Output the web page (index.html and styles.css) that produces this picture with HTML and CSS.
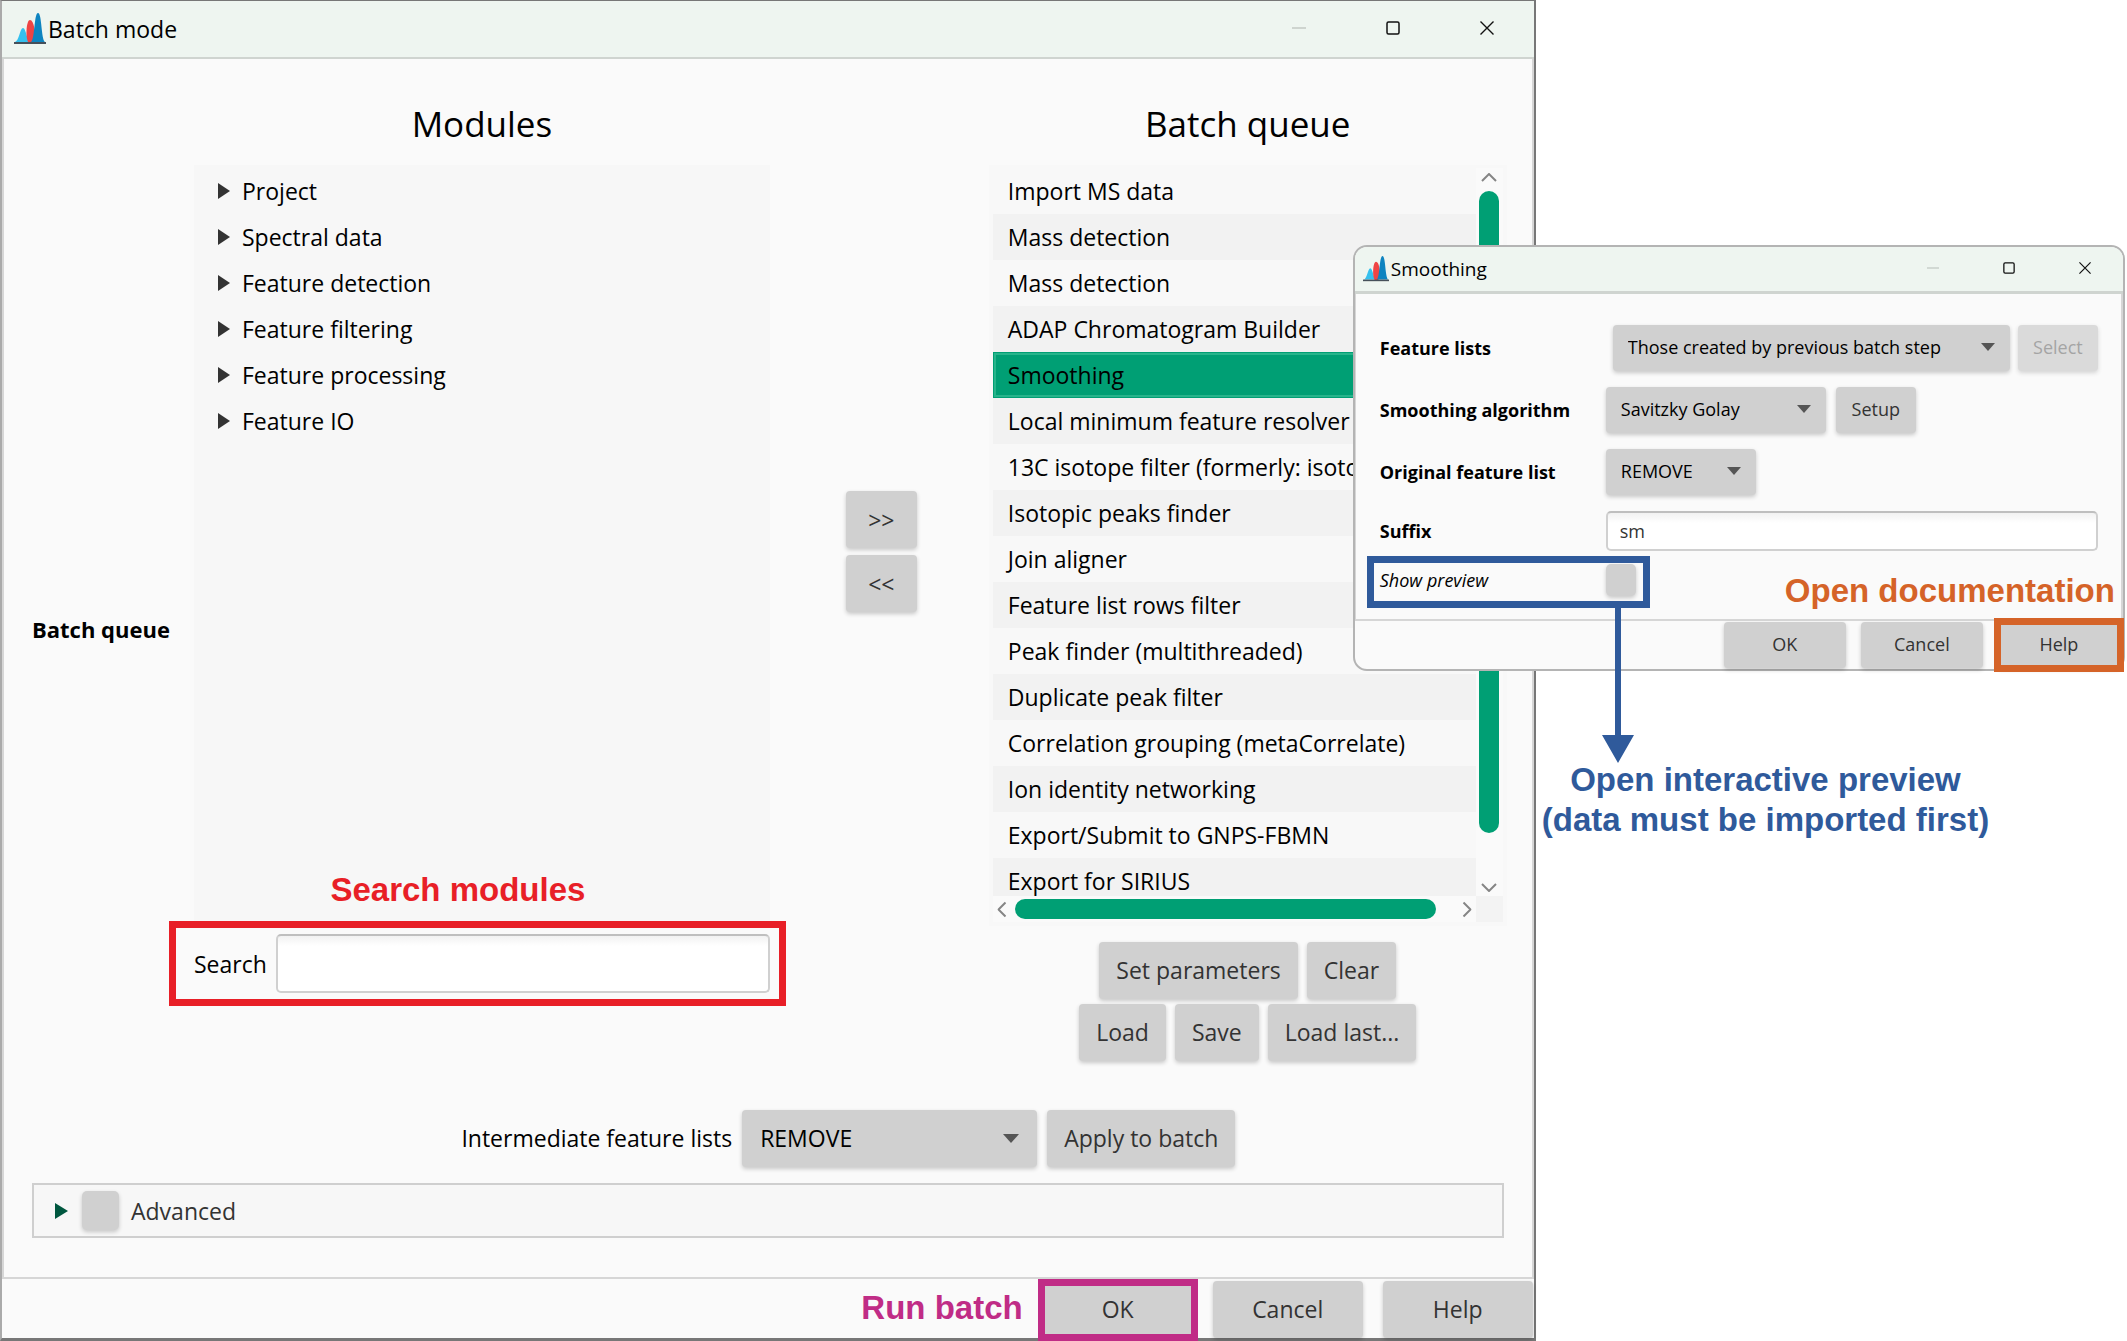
FILE: index.html
```html
<!DOCTYPE html>
<html lang="en">
<head>
<meta charset="utf-8">
<title>Batch mode</title>
<link rel="stylesheet" href="styles.css">
</head>
<body>
<svg class="defs" aria-hidden="true">
  <symbol id="logo" viewBox="0 0 32 32">
    <path d="M1 29C5 28 6 15 9 15s4 13 7 14z" fill="#35c0ee"/>
    <path d="M17 30H15C11 27 12 7 16 7s5 12 5 16c0 4-2 7-4 7z" fill="#ef4444"/>
    <path d="M17 29C21 26 20 0 24 0s3 26 7 29z" fill="#0e84c0"/>
    <path d="M0 29h32v2H0z" fill="#46505a"/>
  </symbol>
  <symbol id="min" viewBox="0 0 14 14"><path d="M0 7h14" stroke="#c3c8c4" stroke-width="1.5"/></symbol>
  <symbol id="max" viewBox="0 0 14 14"><rect x="1" y="1" width="12" height="12" rx="1.5" fill="none" stroke="#111" stroke-width="1.5"/></symbol>
  <symbol id="close" viewBox="0 0 14 14"><path d="M.5.5l13 13M13.5.5l-13 13" stroke="#111" stroke-width="1.4"/></symbol>
  <symbol id="chev" viewBox="0 0 16 9"><path d="M1 8l7-7 7 7" fill="none" stroke="#858585" stroke-width="2"/></symbol>
</svg>

<main class="window">
  <header class="titlebar">
    <svg class="logo"><use href="#logo"/></svg>
    <h1 class="title">Batch mode</h1>
    <div class="controls">
      <button class="control" aria-label="Minimize" disabled><svg><use href="#min"/></svg></button>
      <button class="control" aria-label="Maximize"><svg><use href="#max"/></svg></button>
      <button class="control" aria-label="Close"><svg><use href="#close"/></svg></button>
    </div>
  </header>

  <div class="content">
    <div class="workspace">
      <div class="side-label">Batch queue</div>

      <section class="column">
        <h2 class="heading">Modules</h2>
        <div class="tree">
          <details><summary>Project</summary></details>
          <details><summary>Spectral data</summary></details>
          <details><summary>Feature detection</summary></details>
          <details><summary>Feature filtering</summary></details>
          <details><summary>Feature processing</summary></details>
          <details><summary>Feature IO</summary></details>
          <div class="note note-search">Search modules</div>
        </div>
        <div class="search">
          <label for="search">Search</label>
          <input class="field" id="search" type="text">
          <span class="frame frame-search"></span>
        </div>
      </section>

      <div class="transfer">
        <button class="btn">&gt;&gt;</button>
        <button class="btn">&lt;&lt;</button>
      </div>

      <section class="column">
        <h2 class="heading">Batch queue</h2>
        <div class="queue">
          <ul class="steps">
            <li>Import MS data</li>
            <li>Mass detection</li>
            <li>Mass detection</li>
            <li>ADAP Chromatogram Builder</li>
            <li class="selected">Smoothing</li>
            <li>Local minimum feature resolver</li>
            <li>13C isotope filter (formerly: isoto</li>
            <li>Isotopic peaks finder</li>
            <li>Join aligner</li>
            <li>Feature list rows filter</li>
            <li>Peak finder (multithreaded)</li>
            <li>Duplicate peak filter</li>
            <li>Correlation grouping (metaCorrelate)</li>
            <li>Ion identity networking</li>
            <li>Export/Submit to GNPS-FBMN</li>
            <li>Export for SIRIUS</li>
          </ul>
          <div class="bar bar-v">
            <svg class="chev"><use href="#chev"/></svg>
            <span class="track"><span class="thumb"></span></span>
            <svg class="chev chev-down"><use href="#chev"/></svg>
          </div>
          <div class="bar bar-h">
            <svg class="chev chev-left"><use href="#chev"/></svg>
            <span class="track"><span class="thumb"></span></span>
            <svg class="chev chev-right"><use href="#chev"/></svg>
          </div>
          <div class="corner"></div>
        </div>
        <div class="actions">
          <div class="action-row">
            <button class="btn">Set parameters</button>
            <button class="btn">Clear</button>
          </div>
          <div class="action-row">
            <button class="btn">Load</button>
            <button class="btn">Save</button>
            <button class="btn">Load last...</button>
          </div>
        </div>
      </section>
    </div>

    <div class="intermediate">
      <label for="intermediate">Intermediate feature lists</label>
      <span class="combo combo-wide"><select id="intermediate"><option>REMOVE</option></select></span>
      <button class="btn">Apply to batch</button>
    </div>

    <div class="advanced">
      <span class="arrow"></span>
      <input class="check" type="checkbox" id="advanced">
      <label for="advanced">Advanced</label>
    </div>
  </div>

  <footer class="footer">
    <span class="note note-run">Run batch</span>
    <button class="btn">OK<span class="frame frame-run"></span></button>
    <button class="btn">Cancel</button>
    <button class="btn">Help</button>
  </footer>
</main>

<section class="dialog" role="dialog" aria-label="Smoothing">
  <header class="titlebar">
    <svg class="logo"><use href="#logo"/></svg>
    <h2 class="title">Smoothing</h2>
    <div class="controls">
      <button class="control" aria-label="Minimize" disabled><svg><use href="#min"/></svg></button>
      <button class="control" aria-label="Maximize"><svg><use href="#max"/></svg></button>
      <button class="control" aria-label="Close"><svg><use href="#close"/></svg></button>
    </div>
  </header>
  <div class="form">
    <div class="row">
      <label for="lists">Feature lists</label>
      <div class="group group-lists">
        <span class="combo combo-fill"><select id="lists"><option>Those created by previous batch step</option></select></span>
        <button class="btn" disabled>Select</button>
      </div>
    </div>
    <div class="row">
      <label for="algorithm">Smoothing algorithm</label>
      <div class="group">
        <span class="combo combo-algorithm"><select id="algorithm"><option>Savitzky Golay</option></select></span>
        <button class="btn">Setup</button>
      </div>
    </div>
    <div class="row">
      <label for="original">Original feature list</label>
      <div class="group">
        <span class="combo combo-original"><select id="original"><option>REMOVE</option></select></span>
      </div>
    </div>
    <div class="row">
      <label for="suffix">Suffix</label>
      <input class="field" id="suffix" type="text" value="sm">
    </div>
    <div class="row row-preview">
      <label for="preview">Show preview</label>
      <input class="check" type="checkbox" id="preview">
      <span class="frame frame-preview"></span>
      <svg class="pointer" viewBox="0 0 32 156"><path d="M13 0h6v128h13l-16 28L0 128h13z" fill="#2f5a9b"/></svg>
      <span class="note note-preview">Open interactive preview<br>(data must be imported first)</span>
    </div>
  </div>
  <footer class="footer">
    <span class="note note-docs">Open documentation</span>
    <button class="btn">OK</button>
    <button class="btn">Cancel</button>
    <button class="btn">Help<span class="frame frame-help"></span></button>
  </footer>
</section>
</body>
</html>
```
FILE: styles.css
```css
* { box-sizing: border-box; }

body {
  margin: 0;
  position: relative;
  min-height: 100vh;
  background: #fff;
  color: #000;
  font: 23px/32px "Open Sans", "Noto Sans", sans-serif;
}

button, input, select { font: inherit; margin: 0; }
h1, h2 { margin: 0; font-weight: 400; }
.defs { position: absolute; width: 0; height: 0; }

/* Windows */
.window {
  display: flex;
  flex-direction: column;
  width: 72.2%;
  min-height: 100vh;
  background: #fafafa;
  border: 2px solid #777;
  border-left-color: #aaa;
  border-width: 1px 2px 3px 2px;
}

.titlebar {
  display: flex;
  align-items: center;
  height: 58px;
  padding: 0 0 0 12px;
  gap: 2px;
  background: #eef5f0;
  border-bottom: 2px solid #cfd4d0;
}
.logo { width: 32px; height: 32px; }
.title { flex: 1; font-size: 23px; line-height: 32px; }
.controls { display: flex; }
.control {
  width: 94px;
  height: 40px;
  padding: 0 0 2px;
  border: 0;
  background: none;
  line-height: 0;
}
.control svg { width: 14px; height: 14px; }

.content {
  flex: 1;
  display: flex;
  flex-direction: column;
  padding: 40px 25px 39px 28px;
  border: solid #d6d6d6;
  border-width: 0 2px 2px 2px;
}

/* Module tree and queue */
.workspace {
  display: grid;
  grid-template-columns: 162px 576fr 219fr 518fr;
}
.side-label { align-self: center; padding-top: 98px; font-weight: 700; font-size: 22px; white-space: nowrap; }
.heading { height: 66px; font-size: 35px; line-height: 50px; text-align: center; }

.tree { position: relative; height: 756px; padding-top: 3px; background: #f7f7f7; }
.tree summary {
  display: flex;
  align-items: center;
  gap: 12px;
  height: 46px;
  padding-left: 24px;
  list-style: none;
}
.tree summary::before {
  content: "";
  border: solid transparent;
  border-width: 8px 0 8px 12px;
  border-left-color: #333;
}
.search { position: relative; display: flex; align-items: center; gap: 9px; height: 85px; }
.search .field { flex: 1; height: 59px; }

.field {
  min-width: 0;
  padding: 0 12px;
  background: linear-gradient(#f2f2f2, #fff 10px);
  border: 2px solid #d0d0d0;
  border-top-color: #bfbfbf;
  border-radius: 5px;
  color: #333;
}

.transfer { display: flex; flex-direction: column; align-items: center; gap: 7px; padding: 392px 0 0 4px; }
.transfer .btn { width: 71px; padding: 0; }

.btn {
  position: relative;
  height: 57px;
  padding: 0 17px 2px;
  border: 0;
  border-radius: 4px;
  background: #d0d0d0;
  color: #333;
  box-shadow: 0 2px 4px #0003;
  white-space: nowrap;
}
.btn:disabled { opacity: .75; color: #888; }

.queue {
  display: grid;
  grid-template: 728px 26px / 1fr 27px;
  padding: 3px 4px 4px;
  background: #f8f8f8;
}
.steps { margin: 0; padding: 0; list-style: none; overflow: hidden; }
.steps li { height: 46px; padding: 7px 15px; white-space: nowrap; }
.steps li:nth-child(even) { background: #f2f2f2; }
.steps .selected {
  background: #009f74;
  border: 1px solid #009f74;
  padding: 6px 14px;
  box-shadow: inset 0 0 0 2px #27b48b;
}
.bar { display: flex; align-items: center; background: #fafafa; }
.bar-v { flex-direction: column; padding: 5px 0 4px; gap: 9px; }
.bar-h { padding: 0 1px; gap: 5px; }
.track { flex: 1; display: flex; }
.bar-v .track { width: 20px; flex-direction: column; }
.bar-h .track { height: 20px; }
.thumb { border-radius: 10px; background: #009f74; }
.bar-v .thumb { height: 94%; }
.bar-h .thumb { width: 96%; }
.chev { width: 16px; height: 9px; }
.chev-down { transform: rotate(180deg); }
.chev-left { transform: rotate(-90deg); }
.chev-right { transform: rotate(90deg); }
.corner { background: #f3f3f3; }

.actions { display: flex; flex-direction: column; gap: 5px; padding-top: 16px; align-items: center; }
.action-row { display: flex; gap: 9px; }

/* Lower options */
.intermediate {
  display: flex;
  align-items: center;
  justify-content: center;
  gap: 10px;
  padding: 49px 0 16px;
  margin-left: 158px;
}
.intermediate label { padding-bottom: 2px; }
.combo { position: relative; display: flex; }
.combo select {
  width: 100%;
  height: 57px;
  padding: 0 18px 2px;
  appearance: none;
  border: 0;
  border-radius: 4px;
  background: #d0d0d0;
  color: #000;
  box-shadow: 0 2px 4px #0003;
}
.combo::after {
  content: "";
  position: absolute;
  right: 18px;
  top: calc(50% - 5px);
  border: solid transparent;
  border-width: 9px 8px 0;
  border-top-color: #555;
}
.combo-wide { width: 295px; }

.advanced {
  display: flex;
  align-items: center;
  height: 55px;
  padding-left: 21px;
  margin-right: 3px;
  background: #f7f7f7;
  border: 2px solid #cfcfcf;
  color: #333;
}
.arrow {
  margin-right: 14px;
  border: solid transparent;
  border-width: 8px 0 8px 13px;
  border-left-color: #00573f;
}
.check {
  appearance: none;
  width: 37px;
  height: 39px;
  border-radius: 5px;
  background: #d0d0d0;
  box-shadow: 0 2px 4px #0003;
}
.advanced .check { margin-right: 12px; }

.footer { display: flex; justify-content: flex-end; gap: 20px; padding: 2px 1px 0 0; }
.window .footer .btn { width: 150px; }

/* Smoothing dialog */
.dialog {
  position: absolute;
  top: 245px;
  left: 63.6%;
  width: 36.3%;
  background: #fafafa;
  border: 2px solid #b4b4b4;
  border-radius: 14px;
  font-size: 18px;
  line-height: 26px;
}
.dialog .titlebar { height: 47px; padding: 0 0 0 8px; border-bottom-width: 3px; border-radius: 12px 12px 0 0; }
.dialog .logo { width: 26px; height: 26px; }
.dialog .title { font-size: 19px; line-height: 26px; }
.dialog .control { width: 76px; }
.dialog .control svg { width: 12px; height: 12px; }
.form {
  display: flex;
  flex-direction: column;
  gap: 16px;
  padding: 31px 23px 23px 24px;
  border: solid #d6d6d6;
  border-width: 0 2px 2px 1px;
}
.row { display: grid; grid-template-columns: 226px 1fr; align-items: center; font-weight: 700; }
.row > label { white-space: nowrap; }
.group { display: flex; gap: 10px; font-weight: 400; }
.group-lists { gap: 8px; padding-left: 7px; }
.dialog .btn, .dialog select { height: 46px; }
.dialog .group .btn { width: 80px; padding: 0 0 2px; }
.dialog select { padding: 0 15px 2px; }
.dialog .combo::after { right: 15px; border-width: 8px 7px 0; }
.combo-fill { flex: 1; }
.combo-algorithm { width: 220px; }
.combo-original { width: 150px; }
.dialog .field { height: 40px; font-weight: 400; }
.row-preview { position: relative; margin-top: -3px; font-weight: 400; font-style: italic; }
.dialog .check { width: 30px; height: 32px; }
.dialog .footer { position: relative; gap: 15px; padding: 1px 3px 1px 0; }
.dialog .footer .btn { width: 122px; }

/* Callouts laid over the windows */
.frame { position: absolute; border: 7px solid; pointer-events: none; }
.note {
  font: bold 33px/40px "Liberation Sans", Arial, sans-serif;
  white-space: nowrap;
}
.note-search { position: absolute; left: 0; right: 48px; bottom: 11px; text-align: center; color: #e81f27; }
.frame-search { inset: 0 -16px 0 -25px; color: #e81f27; }
.note-run { align-self: center; padding-bottom: 4px; color: #c02c86; }
.frame-run { inset: -2px -5px -3px; color: #c02c86; }
.frame-preview { top: -8px; bottom: -12px; left: -13px; width: 283px; color: #2f5a9b; }
.pointer { position: absolute; left: 222px; top: 43px; width: 32px; height: 156px; }
.note-preview {
  position: absolute;
  left: 162px;
  top: 196px;
  color: #2f5a9b;
  font-style: normal;
  text-align: center;
}
.note-docs { position: absolute; right: 8px; bottom: 58px; color: #d56328; }
.frame-help { inset: -4px; color: #d56328; }
```
